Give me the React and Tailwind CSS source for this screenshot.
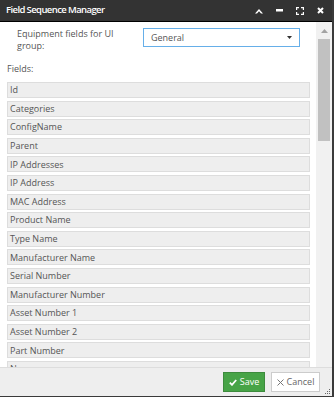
import React from "react";

const fields = [
  "Id",
  "Categories",
  "ConfigName",
  "Parent",
  "IP Addresses",
  "IP Address",
  "MAC Address",
  "Product Name",
  "Type Name",
  "Manufacturer Name",
  "Serial Number",
  "Manufacturer Number",
  "Asset Number 1",
  "Asset Number 2",
  "Part Number",
  "Name",
];

function TitleIcons() {
  return (
    <div className="flex items-center gap-[13px] pr-[8px]">
      <svg width="8" height="6" viewBox="0 0 8 6">
        <path d="M0 5.5 L4 1 L8 5.5 L6 5.5 L4 3.2 L2 5.5Z" fill="#fff" />
      </svg>
      <svg width="7" height="3" viewBox="0 0 7 3">
        <rect x="0" y="0" width="7" height="2.5" fill="#fff" />
      </svg>
      <svg width="8" height="8" viewBox="0 0 8 8" fill="#fff">
        <path d="M0 0h3v1.2H1.2V3H0z M8 0v3H6.8V1.2H5V0z M0 8V5h1.2v1.8H3V8z M8 8H5V6.8h1.8V5H8z" />
      </svg>
      <svg width="7" height="7" viewBox="0 0 7 7">
        <path d="M1 1 L6 6 M6 1 L1 6" stroke="#fff" strokeWidth="2" />
      </svg>
    </div>
  );
}

export default function App() {
  return (
    <div
      className="w-[334px] h-[397px] flex flex-col bg-white border-r-2 border-b border-[#3a3a3a] overflow-hidden"
      style={{ fontFamily: '"Open Sans", "Noto Sans", sans-serif' }}
    >
      {/* title bar */}
      <div className="h-[22px] shrink-0 bg-[#333333] border-b border-black flex items-center justify-between">
        <span className="pl-[6px] text-white text-[9.5px] font-semibold tracking-[-0.6px]">
          Field Sequence Manager
        </span>
        <TitleIcons />
      </div>

      {/* body */}
      <div className="flex-1 flex min-h-0">
        <div className="flex-1 overflow-hidden pl-[7px] pr-[6px]">
          <div className="flex items-start pt-[6px]">
            <div className="w-[136px] shrink-0 pl-[10px] pr-[24px] text-[9px] leading-[12px] text-[#555]">
              Equipment fields for UI group:
            </div>
            <div className="w-[157px] h-[19px] border border-[#66afe9] flex items-center justify-between px-[7px] text-[9px] text-[#555]">
              <span>General</span>
              <svg width="5" height="3" viewBox="0 0 5 3">
                <path d="M0 0h5L2.5 3z" fill="#333" />
              </svg>
            </div>
          </div>
          <div className="mt-[11px] text-[9px] text-[#555] leading-[12px]">Fields:</div>
          <div className="mt-[7px] flex flex-col gap-[2.6px]">
            {fields.map((f) => (
              <div
                key={f}
                className="h-[16px] shrink-0 bg-[#eeeeee] border border-[#dddddd] px-[2px] flex items-center text-[9px] text-[#555]"
              >
                {f}
              </div>
            ))}
          </div>
        </div>
        {/* scrollbar */}
        <div className="w-[16px] shrink-0 bg-[#f1f1f1] flex flex-col items-center pt-[7px]">
          <svg width="7" height="4" viewBox="0 0 7 4">
            <path d="M0 4 L3.5 0 L7 4z" fill="#a3a3a3" />
          </svg>
          <div className="mt-[6px] w-[12px] h-[102px] bg-[#c1c1c1]" />
        </div>
      </div>

      {/* footer */}
      <div className="h-[29px] shrink-0 bg-[#eeeeee] border-t border-[#dddddd] flex items-center justify-end gap-[6px] pr-[12px] relative">
        <button className="h-[20px] w-[42px] bg-[#47a447] border border-[#3d8b3d] text-white text-[9px] flex items-center justify-center gap-[3px]">
          <svg width="8" height="7" viewBox="0 0 8 7">
            <path d="M0.8 3.6 L3 5.8 L7.2 1" stroke="#fff" strokeWidth="1.8" fill="none" />
          </svg>
          Save
        </button>
        <button className="h-[20px] w-[49px] bg-white border border-[#cccccc] text-[#666] text-[9px] flex items-center justify-center gap-[3px]">
          <svg width="7" height="7" viewBox="0 0 7 7">
            <path d="M0.5 0.5 L6.5 6.5 M6.5 0.5 L0.5 6.5" stroke="#777" strokeWidth="1" />
          </svg>
          Cancel
        </button>
        <div className="absolute right-[1px] bottom-[1px] w-[6px] h-[6px]">
          <svg width="6" height="6" viewBox="0 0 6 6" fill="#666">
            <rect x="4" y="0" width="1" height="1" />
            <rect x="2" y="2" width="1" height="1" />
            <rect x="4" y="2" width="1" height="1" />
            <rect x="0" y="4" width="1" height="1" />
            <rect x="2" y="4" width="1" height="1" />
            <rect x="4" y="4" width="1" height="1" />
          </svg>
        </div>
      </div>
    </div>
  );
}
